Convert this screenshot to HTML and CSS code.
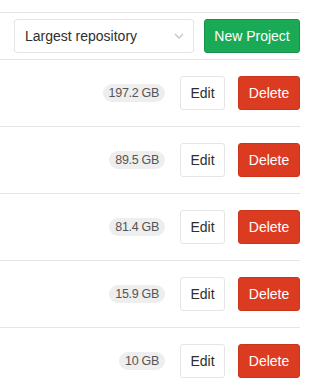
FILE: index.html
```html
<!DOCTYPE html>
<html lang="en">
<head>
  <meta charset="UTF-8">
  <title>Projects - Storage</title>
  <link rel="stylesheet" href="styles.css">
</head>
<body>
  <div class="container">
    <div class="top-bar">
      <div class="select">
        <span>Largest repository</span>
        <svg class="chevron" width="10" height="6" viewBox="0 0 10 6"><path d="M1 1l4 4 4-4" fill="none" stroke="#c4c4c4" stroke-width="1.3"/></svg>
      </div>
      <button class="btn btn-new">New Project</button>
    </div>
    <ul class="project-list">
      <li class="project-row">
        <span class="badge">197.2 GB</span>
        <button class="btn btn-edit">Edit</button>
        <button class="btn btn-delete">Delete</button>
      </li>
      <li class="project-row">
        <span class="badge">89.5 GB</span>
        <button class="btn btn-edit">Edit</button>
        <button class="btn btn-delete">Delete</button>
      </li>
      <li class="project-row">
        <span class="badge">81.4 GB</span>
        <button class="btn btn-edit">Edit</button>
        <button class="btn btn-delete">Delete</button>
      </li>
      <li class="project-row">
        <span class="badge">15.9 GB</span>
        <button class="btn btn-edit">Edit</button>
        <button class="btn btn-delete">Delete</button>
      </li>
      <li class="project-row">
        <span class="badge">10 GB</span>
        <button class="btn btn-edit">Edit</button>
        <button class="btn btn-delete">Delete</button>
      </li>
    </ul>
  </div>
</body>
</html>
```

FILE: styles.css
```css
body {
  margin: 0;
  font-family: "Liberation Sans", Arial, sans-serif;
  background: white;
  color: #2e2e2e;
}
.container {
  width: 300px;
  padding-top: 12px;
}
.top-bar {
  display: flex;
  justify-content: flex-end;
  gap: 10px;
  padding: 6px 0;
  border-top: 1px solid #e5e5e5;
  border-bottom: 1px solid #e5e5e5;
}
.select {
  width: 180px;
  height: 34px;
  box-sizing: border-box;
  border: 1px solid #e5e5e5;
  border-radius: 3px;
  display: flex;
  align-items: center;
  justify-content: space-between;
  padding: 0 9px 0 10px;
  font-size: 14px;
  color: #2e2e2e;
}
.btn {
  height: 34px;
  box-sizing: border-box;
  font-family: inherit;
  font-size: 14px;
  border-radius: 3px;
  padding: 0 4px;
  white-space: nowrap;
  cursor: pointer;
}
.btn-new {
  width: 96px;
  background: #1aaa55;
  border: 1px solid #168f48;
  color: white;
}
.project-list {
  list-style: none;
  margin: 0;
  padding: 0;
}
.project-row {
  display: flex;
  align-items: center;
  justify-content: flex-end;
  padding: 16px 0;
  border-bottom: 1px solid #e5e5e5;
}
.badge {
  background: #eee;
  color: #555;
  font-size: 12.5px;
  border-radius: 9px;
  padding: 3px 6px;
  line-height: 12px;
  letter-spacing: -0.3px;
  margin-right: 15px;
}
.btn-edit {
  width: 45px;
  background: white;
  border: 1px solid #e5e5e5;
  color: #2e2e2e;
  margin-right: 13px;
}
.btn-delete {
  width: 62px;
  background: #db3b21;
  border: 1px solid #c9351d;
  color: white;
}
```
